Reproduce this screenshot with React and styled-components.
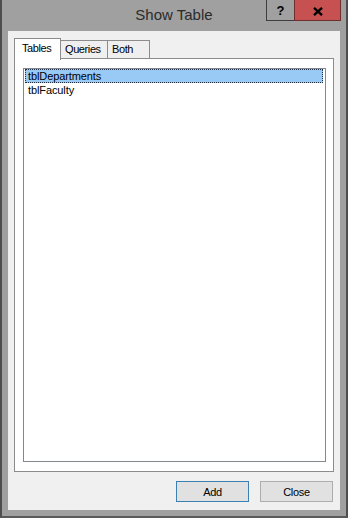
import React from "react";
import styled, { createGlobalStyle } from "styled-components";

const Global = createGlobalStyle`
  html, body { margin: 0; padding: 0; background: #a0a0a0; }
  body { font-family: "Liberation Sans", Arial, sans-serif; }
  * { box-sizing: border-box; }
`;

const Window = styled.div`
  width: 348px;
  height: 518px;
  background: #a0a0a0;
  border-left: 2px solid #4e4e4e;
  border-right: 2px solid #4e4e4e;
  border-bottom: 2px solid #5a5a5a;
  padding: 0 6px 6px 6px;
  display: flex;
  flex-direction: column;
`;

const TitleBar = styled.div`
  height: 31px;
  display: grid;
  grid-template-columns: 1fr auto 1fr;
  align-items: start;
`;

const Title = styled.div`
  grid-column: 2;
  font-family: "Liberation Sans", Arial, sans-serif;
  font-size: 15px;
  line-height: 30px;
  color: #2b2b2b;
  white-space: nowrap;
`;

const CaptionGroup = styled.div`
  grid-column: 3;
  justify-self: end;
  display: flex;
  margin-right: -1px;
`;

const HelpButton = styled.div`
  width: 28px;
  height: 21px;
  border-left: 1px solid #3e3e3e;
  border-bottom: 1px solid #3e3e3e;
  display: flex;
  align-items: center;
  justify-content: center;
  font-family: "Liberation Sans", Arial, sans-serif;
  font-weight: bold;
  font-size: 13px;
  line-height: 1;
  color: #000;
  padding-top: 1px;
`;

const CloseButton = styled.div`
  width: 47px;
  height: 21px;
  background: #c75050;
  border: 1px solid #6e2f2f;
  border-top: none;
  display: flex;
  align-items: center;
  justify-content: center;
  padding-top: 2px;
`;

const Content = styled.div`
  flex: 1;
  background: #f0f0f0;
  padding: 7px 6px 8px 6px;
  display: flex;
  flex-direction: column;
`;

const TabStrip = styled.div`
  height: 21px;
  display: flex;
  align-items: flex-start;
  position: relative;
  z-index: 1;
`;

const Tab = styled.div`
  width: ${(p) => p.$w}px;
  margin-left: ${(p) => (p.$first ? 0 : -1)}px;
  height: ${(p) => (p.$active ? 22 : 19)}px;
  margin-top: ${(p) => (p.$active ? 0 : 2)}px;
  border: 1px solid #8c8c8c;
  border-bottom: ${(p) => (p.$active ? "none" : "1px solid #8c8c8c")};
  background: ${(p) => (p.$active ? "#ffffff" : "#efefef")};
  padding: ${(p) => (p.$active ? "3px 0 0 7px" : "2px 0 0 4px")};
  font-family: "Liberation Sans", Arial, sans-serif;
  font-size: 11px;
  letter-spacing: -0.4px;
  line-height: 13px;
  color: #000;
  white-space: nowrap;
  position: relative;
  z-index: ${(p) => (p.$active ? 2 : 1)};
`;

const Panel = styled.div`
  flex: 1;
  margin-top: -1px;
  background: #ffffff;
  border: 1px solid #8c8c8c;
  padding: 9px 7px 9px 8px;
  display: flex;
`;

const ListBox = styled.div`
  flex: 1;
  background: #ffffff;
  border: 1px solid #828790;
  padding: 0 2px 0 1px;
`;

const Item = styled.div`
  height: 14px;
  line-height: 12px;
  padding-left: 2px;
  font-family: "Liberation Sans", Arial, sans-serif;
  font-size: 11px;
  letter-spacing: -0.1px;
  color: #000;
  background: ${(p) => (p.$selected ? "#99c9f5" : "transparent")};
  border: 1px ${(p) => (p.$selected ? "dotted #1e2f45" : "solid transparent")};
  white-space: nowrap;
`;

const ButtonRow = styled.div`
  margin-top: 9px;
  display: flex;
  justify-content: flex-end;
  gap: 11px;
  padding-right: 1px;
`;

const Button = styled.div`
  width: 73px;
  height: 21px;
  background: #e1e1e1;
  border: 1px solid ${(p) => (p.$default ? "#3c7fb1" : "#adadad")};
  display: flex;
  align-items: center;
  justify-content: center;
  font-family: "Liberation Sans", Arial, sans-serif;
  font-size: 11px;
  letter-spacing: -0.3px;
  color: #000;
`;

export default function App() {
  return (
    <>
      <Global />
      <Window>
        <TitleBar>
          <Title>Show Table</Title>
          <CaptionGroup>
            <HelpButton>?</HelpButton>
            <CloseButton>
              <svg width="10" height="9" viewBox="0 0 10 9">
                <path d="M1 0.8 L9 8.2 M9 0.8 L1 8.2" stroke="#000" strokeWidth="2.3" />
              </svg>
            </CloseButton>
          </CaptionGroup>
        </TitleBar>
        <Content>
          <TabStrip>
            <Tab $first $active $w={47}>Tables</Tab>
            <Tab $w={48}>Queries</Tab>
            <Tab $w={43}>Both</Tab>
          </TabStrip>
          <Panel>
            <ListBox>
              <Item $selected>tblDepartments</Item>
              <Item>tblFaculty</Item>
            </ListBox>
          </Panel>
          <ButtonRow>
            <Button $default>Add</Button>
            <Button>Close</Button>
          </ButtonRow>
        </Content>
      </Window>
    </>
  );
}
